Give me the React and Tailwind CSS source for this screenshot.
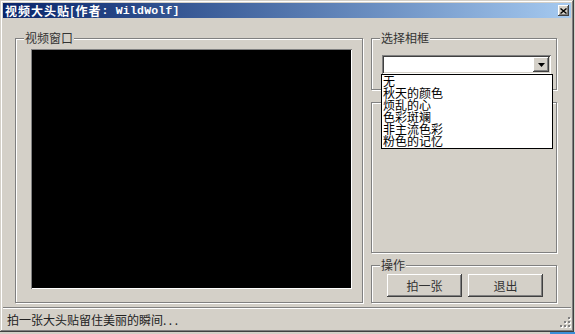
const etched = "border border-[#808080] shadow-[inset_1px_1px_#fff,1px_1px_#fff]";
const raised = "shadow-[inset_-1px_-1px_#404040,inset_1px_1px_#fff,inset_-2px_-2px_#808080,inset_2px_2px_#d4d0c8]";

function GroupLabel({ children }) {
  return (
    <span className="absolute left-[8px] top-[-8px] h-[14px] px-[1px] bg-[#d4d0c8] text-[12px] leading-[14px] text-[#333]">
      {children}
    </span>
  );
}

function Grip() {
  const dots = [
    [8, 0],
    [4, 4],
    [8, 4],
    [0, 8],
    [4, 8],
    [8, 8],
  ];
  return (
    <svg width="11" height="11" viewBox="0 0 11 11" className="self-end mb-[1px]">
      {dots.map(([x, y], i) => (
        <g key={i}>
          <rect x={x + 1} y={y + 1} width="2" height="2" fill="#ffffff" />
          <rect x={x} y={y} width="2" height="2" fill="#808080" />
        </g>
      ))}
    </svg>
  );
}

export default function App() {
  const items = ["无", "秋天的颜色", "烦乱的心", "色彩斑斓", "非主流色彩", "粉色的记忆"];
  return (
    <div className="w-[575px] h-[334px] bg-[#d4d0c8] flex flex-col font-['Noto_Sans_CJK_SC',sans-serif]">
      <div className="w-[574px] h-[332px] flex flex-col p-[3px] shadow-[inset_-1px_-1px_#404040,inset_1px_1px_#d4d0c8,inset_-2px_-2px_#808080,inset_2px_2px_#fff]">
        {/* title bar */}
        <div className="h-[15px] flex items-center justify-between bg-linear-to-r from-[#0a246a] to-[#a6caf0] pl-[2px] pr-[2px]">
          <div className="flex items-center text-white font-bold text-[12px] leading-[15px] whitespace-nowrap">
            <span className="tracking-[1px]">视频大头贴[作者</span>
            <span className="font-['Liberation_Mono',monospace] text-[11.5px] tracking-[0.2px]">: WildWolf]</span>
          </div>
          <div className={`w-[11px] h-[11px] bg-[#d4d0c8] flex items-center justify-center ${raised}`}>
            <svg width="7" height="6" viewBox="0 0 7 6">
              <path d="M0.5 0.5 L6.5 5.5 M6.5 0.5 L0.5 5.5" stroke="#000" strokeWidth="1.4" />
            </svg>
          </div>
        </div>

        {/* body */}
        <div className="h-[289px] flex pt-[20px] pl-[12px] pb-[4px] gap-[8px]">
          {/* video group */}
          <div className={`relative w-[348px] h-[265px] pl-[15px] pt-[10px] ${etched}`}>
            <GroupLabel>视频窗口</GroupLabel>
            <div className="w-[321px] h-[240px] bg-black shadow-[inset_1px_1px_#808080,inset_-1px_-1px_#fff] p-[1px]">
              <div className="w-full h-full bg-black" />
            </div>
          </div>

          {/* right column */}
          <div className="w-[186px] flex flex-col gap-[12px]">
            <div className={`relative h-[52px] pl-[10px] pt-[16px] ${etched}`}>
              <GroupLabel>选择相框</GroupLabel>
              <div className="relative w-[169px] h-[19px] bg-white flex items-center justify-end pr-[2px] shadow-[inset_1px_1px_#808080,inset_-1px_-1px_#fff,inset_2px_2px_#404040,inset_-2px_-2px_#d4d0c8]">
                <div className={`w-[16px] h-[15px] bg-[#d4d0c8] flex items-center justify-center ${raised}`}>
                  <svg width="7" height="4" viewBox="0 0 7 4">
                    <polygon points="0,0 7,0 3.5,4" fill="#000" />
                  </svg>
                </div>
                <div className="absolute left-[-1px] top-[19px] z-10 w-[172px] h-[75px] border border-black bg-white pl-[1px] flex flex-col text-[12px] leading-[12px] text-black">
                  {items.map((t) => (
                    <div key={t} className="h-[12px] whitespace-nowrap">
                      {t}
                    </div>
                  ))}
                </div>
              </div>
            </div>

            <div className={`h-[151px] ${etched}`} />

            <div className={`relative h-[38px] flex gap-[6px] pl-[15px] pt-[8px] ${etched}`}>
              <GroupLabel>操作</GroupLabel>
              <button className={`w-[75px] h-[23px] bg-[#d4d0c8] text-[12px] leading-[23px] text-[#333] ${raised}`}>
                拍一张
              </button>
              <button className={`w-[75px] h-[23px] bg-[#d4d0c8] text-[12px] leading-[23px] text-[#333] ${raised}`}>
                退出
              </button>
            </div>
          </div>
        </div>

        {/* separator */}
        <div className="h-[2px] border-t border-b border-t-[#808080] border-b-white" />

        {/* status bar */}
        <div className="h-[20px] flex justify-between pl-[4px] pt-[4px]">
          <span className="text-[12px] leading-[14px] text-[#222] whitespace-nowrap">
            拍一张大头贴留住美丽的瞬间<span className="tracking-[2.5px]">...</span>
          </span>
          <Grip />
        </div>
      </div>
      <div className="h-[2px] flex justify-end">
        <div className="w-[25px] h-[2px] bg-[#3b8fd8]" />
      </div>
    </div>
  );
}
